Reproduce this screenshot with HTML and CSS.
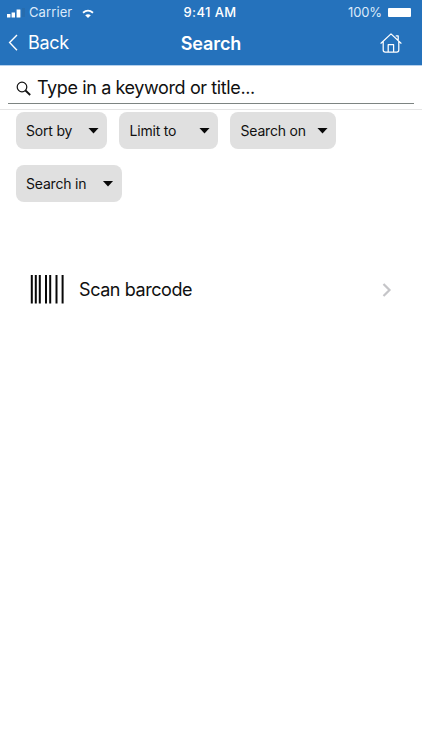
FILE: index.html
```html
<!DOCTYPE html>
<html lang="en">
<head>
<meta charset="utf-8">
<title>Search</title>
<link rel="stylesheet" href="styles.css">
</head>
<body>
<header class="header">
  <div class="status">
    <div class="status-left">
      <svg class="signal" width="18" height="12" viewBox="0 0 18 12"><path d="M0 7h3.4v3.4H0zM4.6 5.4H8v5H4.6zM9.6 2.5H13.4v7.9H9.6z" fill="#fff"/><path d="M15 1h3v9h-3z" fill="#276cad"/></svg>
      <span class="carrier">Carrier</span>
      <svg class="wifi" width="12" height="10" viewBox="0 0 12 10" fill="none" stroke="#fff"><path d="M1 3.7C4 1.2 8 1.2 11 3.7" stroke-width="1.9"/><path d="M3.2 6.2c1.8-1.4 3.8-1.4 5.6 0L6 9z" fill="#fff" stroke="none"/></svg>
    </div>
    <span class="time">9:41 AM</span>
    <div class="status-right"><span class="percent">100%</span><span class="battery"></span></div>
  </div>
  <nav class="nav">
    <div class="back">
      <svg width="10" height="18" viewBox="0 0 10 18" fill="none" stroke="#fff" stroke-width="1.4"><path d="M9 1 1.6 8.6 9 16.2"/></svg>
      <span class="back-label">Back</span>
    </div>
    <h1 class="title">Search</h1>
    <svg class="home" width="22" height="20" viewBox="0 0 22 20" fill="none" stroke="#fff" stroke-width="1.25" stroke-linejoin="round" stroke-linecap="round"><path d="M1 10.2 11 .9l10 9.3M3.2 8.5V17q0 2 2 2h11.6q2 0 2-2V8.5M8.2 18.8v-7.1h5.4v7.1M16.2 2.9h2v3.6"/></svg>
  </nav>
</header>
<main>
  <section class="search">
    <div class="field">
      <svg width="16" height="16" viewBox="0 0 16 16" fill="none" stroke="#111" stroke-width="1.2"><circle cx="6" cy="6" r="4.8"/><path d="m9.5 9.5 4.7 4.5" stroke-width="1.8"/></svg>
      <span class="placeholder">Type in a keyword or title...</span>
    </div>
  </section>
  <div class="filters">
    <div class="chip sort"><span>Sort by</span><i class="caret"></i></div>
    <div class="chip limit"><span>Limit to</span><i class="caret"></i></div>
    <div class="chip on"><span>Search on</span><i class="caret"></i></div>
    <div class="chip in"><span>Search in</span><i class="caret"></i></div>
  </div>
  <div class="scan">
    <svg width="34" height="30" viewBox="0 0 34 30" stroke="#080808" stroke-width="2"><path d="M1.8 0v28.5M5.8 0v28.5M9.8 0v28.5M16 0v28.5M20.2 0v28.5M26.5 0v28.5M32.6 0v28.5"/></svg>
    <span class="scan-label">Scan barcode</span>
    <svg class="next" width="10" height="14" viewBox="0 0 10 14" fill="none" stroke="#c5c5c8" stroke-width="2.2"><path d="m1.5 1 6 6-6 6"/></svg>
  </div>
</main>
</body>
</html>
```
FILE: styles.css
```css
* { box-sizing: border-box; }
body { margin: 0; height: 750px; overflow: hidden; background: #fff; color: #101010; font-family: Inter, "Liberation Sans", sans-serif; }
svg { display: block; flex: none; }
span, h1 { white-space: nowrap; }
.header { height: 66px; background: #2572bc; border-bottom: 1px solid #b5d0ec; color: #fff; }
.status { display: grid; grid-template-columns: 1fr auto 1fr; align-items: center; height: 24px; padding: 0 11px 0 7px; font-size: 13px; line-height: 24px; }
.status-left, .status-right { display: flex; align-items: center; }
.signal { margin-top: 2px; }
.carrier { width: 45px; margin-left: 4px; letter-spacing: .1px; color: #dceafa; }
.wifi { margin: 3px 0 0 8px; }
.time { font-weight: 500; letter-spacing: .4px; transform: translateX(1px); }
.status-right { justify-content: flex-end; }
.percent { color: #dceafa; letter-spacing: -.1px; }
.battery { width: 23px; height: 9px; margin-left: 6px; border-radius: 1px; background: #fff; }
.nav { display: grid; grid-template-columns: 1fr auto 1fr; align-items: center; height: 38px; padding: 0 20px 0 8px; }
.back { display: flex; align-items: center; }
.back-label { margin: -1px 0 0 10px; font-size: 18px; letter-spacing: -.3px; }
.title { margin: 0; font-size: 18px; font-weight: 600; letter-spacing: -.1px; transform: translateX(6px); }
.home { justify-self: end; }
.search { height: 44px; padding: 0 8px; border-bottom: 1px solid #e5e5e5; }
.field { display: flex; align-items: center; height: 38px; padding: 0 8px; border-bottom: 1px solid #7d8482; }
.field svg { margin-top: 8px; }
.placeholder { margin: 6px 0 0 5px; font-size: 18px; letter-spacing: -.39px; }
.filters { display: flex; flex-wrap: wrap; gap: 16px 12px; padding: 2px 15px 0 15.5px; }
.chip { display: flex; align-items: center; justify-content: space-between; height: 37px; padding: 0 8px 0 10.5px; border-radius: 8px; background: #e0e0e0; font-size: 14px; letter-spacing: -.2px; }
.sort { width: 91.5px; }
.limit { width: 99px; }
.on { width: 106px; }
.in { width: 106px; }
.caret { width: 11px; height: 6px; background: #080808; clip-path: polygon(0 0, 100% 0, 50% 100%); }
.scan { display: flex; align-items: center; height: 56px; margin-top: 60px; padding: 0 30px; }
.scan-label { margin: -1px 0 0 15px; font-size: 18px; letter-spacing: -.42px; }
.next { margin-left: auto; }
```
